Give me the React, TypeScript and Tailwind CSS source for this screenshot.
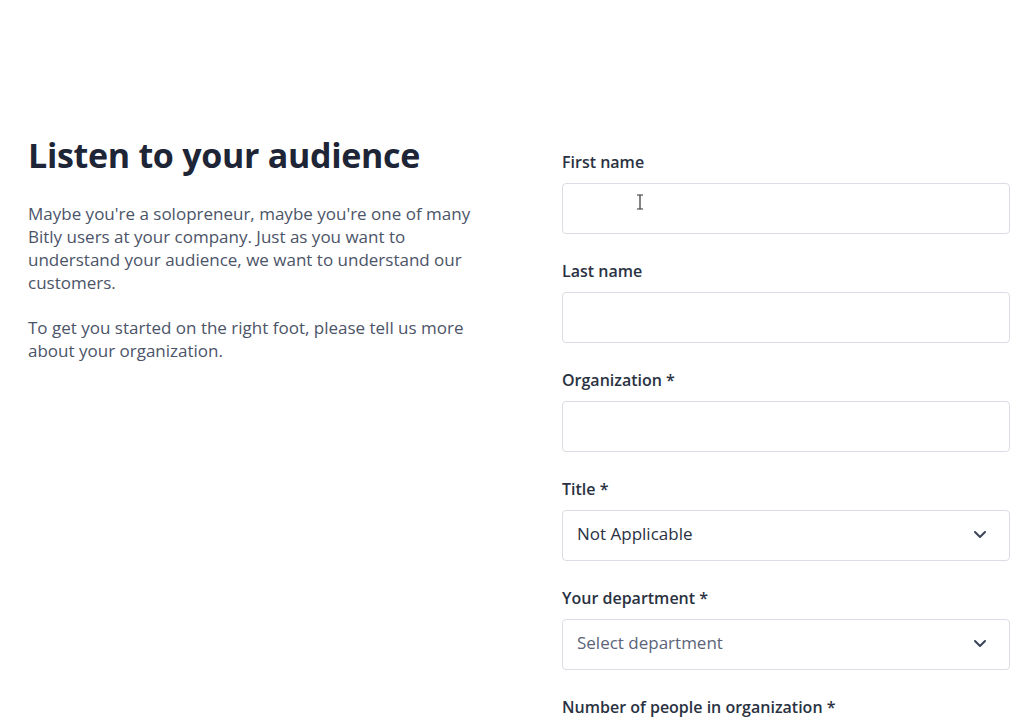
const Field = ({ label, children }: { label: string; children: React.ReactNode }) => (
  <div className="flex flex-col">
    <label className="text-[16px] leading-[20px] font-semibold text-[#2a3242]">{label}</label>
    <div className="mt-[11px]">{children}</div>
  </div>
);

const Chevron = () => (
  <svg width="14" height="9" viewBox="0 0 14 9" fill="none" className="text-[#3b4457]">
    <path d="M2 2l5 5 5-5" stroke="currentColor" strokeWidth="2" strokeLinecap="round" strokeLinejoin="round" />
  </svg>
);

const Select = ({ value, placeholder }: { value: string; placeholder?: boolean }) => (
  <div className="flex h-[51px] items-center justify-between rounded-[4px] border border-[#dadde4] bg-white pr-[22px] pb-[3px] pl-[14px]">
    <span className={`text-[17px] ${placeholder ? "text-[#5b6479]" : "text-[#2a3242]"}`}>{value}</span>
    <Chevron />
  </div>
);

const Input = ({ cursor }: { cursor?: boolean }) => (
  <div className="relative h-[51px] rounded-[4px] border border-[#dadde4] bg-white">
    {cursor && (
      <svg className="absolute top-[10px] left-[73px]" width="8" height="16" viewBox="0 0 8 16" fill="none">
        <path d="M1 1h6M4 1v14M1 15h6" stroke="#333" strokeWidth="1.2" />
      </svg>
    )}
  </div>
);

export default function App() {
  return (
    <div className="h-[720px] overflow-hidden bg-white font-['Open_Sans',sans-serif]">
      <div className="flex pt-[135px] pl-[28px]">
        <div className="w-[460px]">
          <h1 className="text-[34px] leading-[40px] font-bold tracking-[-0.3px] text-[#1d2536]">
            Listen to your audience
          </h1>
          <div className="mt-[27px] w-[450px] space-y-[22px] text-[17px] leading-[23px] text-[#4b5468]">
            <p>
              Maybe you're a solopreneur, maybe you're one of many Bitly users at your company. Just as you want to
              understand your audience, we want to understand our customers.
            </p>
            <p>To get you started on the right foot, please tell us more about your organization.</p>
          </div>
        </div>
        <form className="ml-[74px] w-[448px] space-y-[27px] pt-[17px]">
          <Field label="First name">
            <Input cursor />
          </Field>
          <Field label="Last name">
            <Input />
          </Field>
          <Field label="Organization *">
            <Input />
          </Field>
          <Field label="Title *">
            <Select value="Not Applicable" />
          </Field>
          <Field label="Your department *">
            <Select value="Select department" placeholder />
          </Field>
          <Field label="Number of people in organization *">
            <Input />
          </Field>
        </form>
      </div>
    </div>
  );
}
